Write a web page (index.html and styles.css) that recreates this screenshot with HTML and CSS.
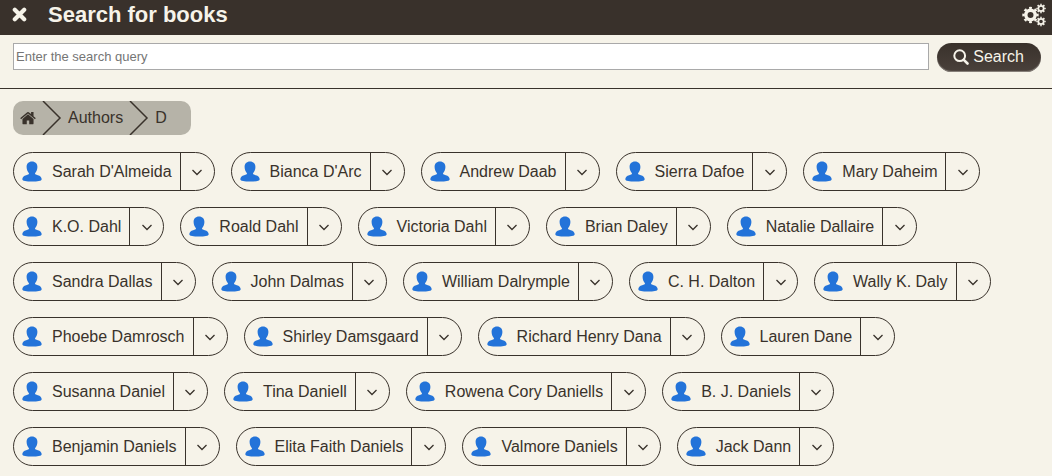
FILE: index.html
```html
<!DOCTYPE html>
<html lang="en">
<head>
  <meta charset="utf-8">
  <title>Search for books</title>
  <link rel="stylesheet" href="styles.css">
</head>
<body>
  <!-- Shared icons -->
  <svg class="sprite" aria-hidden="true">
    <symbol id="user" viewBox="0 0 20 22">
      <path d="M10 .5C6.600 .5 4.600 2.800 4.600 6C4.600 8.600 5.600 10.800 7 12.300C7 13.400 6 13.800 4.200 14.200C1.800 14.800 .300 16.300 .300 18.200C.300 20 4.500 20.600 10 20.600S19.700 20 19.700 18.200C19.700 16.300 18.200 14.800 15.800 14.200C14 13.800 13 13.400 13 12.300C14.400 10.800 15.400 8.600 15.400 6C15.400 2.800 13.400 .5 10 .5Z"/>
    </symbol>
    <symbol id="down" viewBox="0 0 12 8">
      <path d="M1.500 2L6 6.500L10.500 2" fill="none" stroke="currentColor" stroke-width="1.300"/>
    </symbol>
    <symbol id="separator" viewBox="0 0 20 34">
      <path d="M1 0L18 17L1 34" fill="none" stroke="currentColor" stroke-width="1.500"/>
    </symbol>
  </svg>

  <header class="header">
    <button class="icon-btn" type="button" aria-label="Close">
      <svg class="close-icon" viewBox="0 0 16 16">
        <path d="M2.800 2.800L12.200 12.200M12.200 2.800L2.800 12.200" stroke="currentColor" stroke-width="4.200" stroke-linecap="round"/>
      </svg>
    </button>
    <h1 class="title">Search for books</h1>
    <button class="icon-btn" type="button" aria-label="Settings">
      <svg class="gears-icon" viewBox="0 0 24 24" fill="none" stroke="currentColor">
        <circle cx="8.500" cy="12" r="4.700" stroke-width="3.400"/>
        <circle cx="8.500" cy="12" r="7" stroke-width="2.400" pathLength="80" stroke-dasharray="5 5" stroke-dashoffset="2.500"/>
        <circle cx="19" cy="5.500" r="2.700" stroke-width="1.800"/>
        <circle cx="19" cy="5.500" r="4" stroke-width="1.500" pathLength="80" stroke-dasharray="5 5" stroke-dashoffset="2.500"/>
        <circle cx="19" cy="18.500" r="2.700" stroke-width="1.800"/>
        <circle cx="19" cy="18.500" r="4" stroke-width="1.500" pathLength="80" stroke-dasharray="5 5" stroke-dashoffset="2.500"/>
      </svg>
    </button>
  </header>

  <form class="search">
    <input class="search-input" type="text" placeholder="Enter the search query" aria-label="Search query">
    <button class="search-btn" type="button">
      <svg class="search-icon" viewBox="0 0 16 16" fill="none" stroke="currentColor">
        <circle cx="6.700" cy="6.700" r="5.400" stroke-width="2"/>
        <path d="M10.800 10.800L14.500 14.500" stroke-width="2.600" stroke-linecap="round"/>
      </svg>
      Search
    </button>
  </form>

  <main class="content">
    <nav class="breadcrumb" aria-label="Breadcrumb">
      <a class="crumb" href="#" aria-label="Home">
        <svg class="home-icon" viewBox="0 0 1664 1400" fill="currentColor">
          <path transform="translate(0 -190)" d="M1408 992v480q0 26-19 45t-45 19h-384v-384h-256v384h-384q-26 0-45-19t-19-45v-480q0-1 .5-3t.5-3l575-474 575 474q1 2 1 6zm223-69l-62 74q-8 9-21 11h-3q-13 0-21-7l-692-577-692 577q-12 8-24 7-13-2-21-11l-62-74q-8-10-7-23.500t11-21.500l719-599q32-26 76-26t76 26l244 204v-195q0-14 9-23t23-9h192q14 0 23 9t9 23v408l219 182q10 8 11 21.500t-7 23.500z"/>
        </svg>
      </a>
      <svg class="separator"><use href="#separator"/></svg>
      <a class="crumb" href="#">Authors</a>
      <svg class="separator"><use href="#separator"/></svg>
      <a class="crumb" href="#">D</a>
    </nav>

    <ul class="authors">
      <li class="author"><a class="name" href="#"><svg class="user-icon"><use href="#user"/></svg>Sarah D'Almeida</a><button class="more" type="button" aria-label="More"><svg class="down-icon"><use href="#down"/></svg></button></li>
      <li class="author"><a class="name" href="#"><svg class="user-icon"><use href="#user"/></svg>Bianca D'Arc</a><button class="more" type="button" aria-label="More"><svg class="down-icon"><use href="#down"/></svg></button></li>
      <li class="author"><a class="name" href="#"><svg class="user-icon"><use href="#user"/></svg>Andrew Daab</a><button class="more" type="button" aria-label="More"><svg class="down-icon"><use href="#down"/></svg></button></li>
      <li class="author"><a class="name" href="#"><svg class="user-icon"><use href="#user"/></svg>Sierra Dafoe</a><button class="more" type="button" aria-label="More"><svg class="down-icon"><use href="#down"/></svg></button></li>
      <li class="author"><a class="name" href="#"><svg class="user-icon"><use href="#user"/></svg>Mary Daheim</a><button class="more" type="button" aria-label="More"><svg class="down-icon"><use href="#down"/></svg></button></li>
      <li class="author"><a class="name" href="#"><svg class="user-icon"><use href="#user"/></svg>K.O. Dahl</a><button class="more" type="button" aria-label="More"><svg class="down-icon"><use href="#down"/></svg></button></li>
      <li class="author"><a class="name" href="#"><svg class="user-icon"><use href="#user"/></svg>Roald Dahl</a><button class="more" type="button" aria-label="More"><svg class="down-icon"><use href="#down"/></svg></button></li>
      <li class="author"><a class="name" href="#"><svg class="user-icon"><use href="#user"/></svg>Victoria Dahl</a><button class="more" type="button" aria-label="More"><svg class="down-icon"><use href="#down"/></svg></button></li>
      <li class="author"><a class="name" href="#"><svg class="user-icon"><use href="#user"/></svg>Brian Daley</a><button class="more" type="button" aria-label="More"><svg class="down-icon"><use href="#down"/></svg></button></li>
      <li class="author"><a class="name" href="#"><svg class="user-icon"><use href="#user"/></svg>Natalie Dallaire</a><button class="more" type="button" aria-label="More"><svg class="down-icon"><use href="#down"/></svg></button></li>
      <li class="author"><a class="name" href="#"><svg class="user-icon"><use href="#user"/></svg>Sandra Dallas</a><button class="more" type="button" aria-label="More"><svg class="down-icon"><use href="#down"/></svg></button></li>
      <li class="author"><a class="name" href="#"><svg class="user-icon"><use href="#user"/></svg>John Dalmas</a><button class="more" type="button" aria-label="More"><svg class="down-icon"><use href="#down"/></svg></button></li>
      <li class="author"><a class="name" href="#"><svg class="user-icon"><use href="#user"/></svg>William Dalrymple</a><button class="more" type="button" aria-label="More"><svg class="down-icon"><use href="#down"/></svg></button></li>
      <li class="author"><a class="name" href="#"><svg class="user-icon"><use href="#user"/></svg>C. H. Dalton</a><button class="more" type="button" aria-label="More"><svg class="down-icon"><use href="#down"/></svg></button></li>
      <li class="author"><a class="name" href="#"><svg class="user-icon"><use href="#user"/></svg>Wally K. Daly</a><button class="more" type="button" aria-label="More"><svg class="down-icon"><use href="#down"/></svg></button></li>
      <li class="author"><a class="name" href="#"><svg class="user-icon"><use href="#user"/></svg>Phoebe Damrosch</a><button class="more" type="button" aria-label="More"><svg class="down-icon"><use href="#down"/></svg></button></li>
      <li class="author"><a class="name" href="#"><svg class="user-icon"><use href="#user"/></svg>Shirley Damsgaard</a><button class="more" type="button" aria-label="More"><svg class="down-icon"><use href="#down"/></svg></button></li>
      <li class="author"><a class="name" href="#"><svg class="user-icon"><use href="#user"/></svg>Richard Henry Dana</a><button class="more" type="button" aria-label="More"><svg class="down-icon"><use href="#down"/></svg></button></li>
      <li class="author"><a class="name" href="#"><svg class="user-icon"><use href="#user"/></svg>Lauren Dane</a><button class="more" type="button" aria-label="More"><svg class="down-icon"><use href="#down"/></svg></button></li>
      <li class="author"><a class="name" href="#"><svg class="user-icon"><use href="#user"/></svg>Susanna Daniel</a><button class="more" type="button" aria-label="More"><svg class="down-icon"><use href="#down"/></svg></button></li>
      <li class="author"><a class="name" href="#"><svg class="user-icon"><use href="#user"/></svg>Tina Daniell</a><button class="more" type="button" aria-label="More"><svg class="down-icon"><use href="#down"/></svg></button></li>
      <li class="author"><a class="name" href="#"><svg class="user-icon"><use href="#user"/></svg>Rowena Cory Daniells</a><button class="more" type="button" aria-label="More"><svg class="down-icon"><use href="#down"/></svg></button></li>
      <li class="author"><a class="name" href="#"><svg class="user-icon"><use href="#user"/></svg>B. J. Daniels</a><button class="more" type="button" aria-label="More"><svg class="down-icon"><use href="#down"/></svg></button></li>
      <li class="author"><a class="name" href="#"><svg class="user-icon"><use href="#user"/></svg>Benjamin Daniels</a><button class="more" type="button" aria-label="More"><svg class="down-icon"><use href="#down"/></svg></button></li>
      <li class="author"><a class="name" href="#"><svg class="user-icon"><use href="#user"/></svg>Elita Faith Daniels</a><button class="more" type="button" aria-label="More"><svg class="down-icon"><use href="#down"/></svg></button></li>
      <li class="author"><a class="name" href="#"><svg class="user-icon"><use href="#user"/></svg>Valmore Daniels</a><button class="more" type="button" aria-label="More"><svg class="down-icon"><use href="#down"/></svg></button></li>
      <li class="author"><a class="name" href="#"><svg class="user-icon"><use href="#user"/></svg>Jack Dann</a><button class="more" type="button" aria-label="More"><svg class="down-icon"><use href="#down"/></svg></button></li>
    </ul>
  </main>
</body>
</html>
```
FILE: styles.css
```css
* {
  box-sizing: border-box;
}

body {
  margin: 0;
  background-color: #f6f3e9;
  color: #39322b;
  font-family: "Liberation Sans", Arial, sans-serif;
  font-size: 16px;
}

a {
  color: inherit;
  text-decoration: none;
}

button {
  padding: 0;
  border: none;
  background: none;
  color: inherit;
  font: inherit;
  cursor: pointer;
}

svg {
  display: block;
  flex-shrink: 0;
}

.sprite {
  position: absolute;
  width: 0;
  height: 0;
}

/* Top bar */
.header {
  display: flex;
  align-items: center;
  height: 35px;
  padding: 0 6px 5px 12px;
  background-color: #39312b;
  color: #f6f3e9;
}

.title {
  flex: 1;
  margin: 0;
  padding-left: 20px;
  font-size: 22px;
  line-height: 30px;
}

.close-icon {
  width: 16px;
  height: 16px;
}

.gears-icon {
  width: 24px;
  height: 24px;
}

/* Search form */
.search {
  display: flex;
  align-items: flex-start;
  gap: 8px;
  padding: 8px 11px 16px 13px;
  border-bottom: 1px solid #39322b;
}

.search-input {
  flex: 1;
  min-width: 0;
  height: 27px;
  padding: 1px 2px;
  border: 1px solid #a9a9a9;
  background-color: #fff;
  color: #39322b;
  font-family: inherit;
  font-size: 13px;
}

.search-input::placeholder {
  color: #757575;
}

.search-btn {
  display: flex;
  align-items: center;
  gap: 4px;
  height: 29px;
  padding: 0 17px 2px 16px;
  border-radius: 15px;
  background-image: linear-gradient(#39312b, #4a413b);
  box-shadow: inset 0 -1px 1px #8d8781;
  color: #f6f3e9;
}

.search-icon {
  width: 16px;
  height: 16px;
}

.content {
  padding: 12px 13px;
}

/* Breadcrumb */
.breadcrumb {
  display: inline-flex;
  align-items: center;
  height: 34px;
  padding: 0 24px 0 7px;
  border-radius: 10px;
  background-color: #b6b3a8;
  vertical-align: top;
}

.crumb {
  padding-right: 6px;
}

.separator + .crumb {
  padding-left: 6px;
}

.breadcrumb .crumb:last-child {
  padding-right: 0;
}

.home-icon {
  width: 16px;
  height: 14px;
}

.separator {
  width: 20px;
  height: 34px;
}

/* Authors */
.authors {
  display: flex;
  flex-wrap: wrap;
  gap: 16px;
  margin: 17px 0 0;
  padding: 0;
  list-style: none;
}

.author {
  display: flex;
  height: 39px;
  border: 1px solid #39322b;
  border-radius: 20px;
}

.name {
  display: flex;
  align-items: center;
  gap: 10px;
  padding: 0 8px;
}

.user-icon {
  width: 20px;
  height: 22px;
  fill: #2373d9;
}

.more {
  display: flex;
  align-items: center;
  justify-content: center;
  width: 34px;
  border-left: 1px solid #39322b;
}

.down-icon {
  width: 12px;
  height: 8px;
}
```
